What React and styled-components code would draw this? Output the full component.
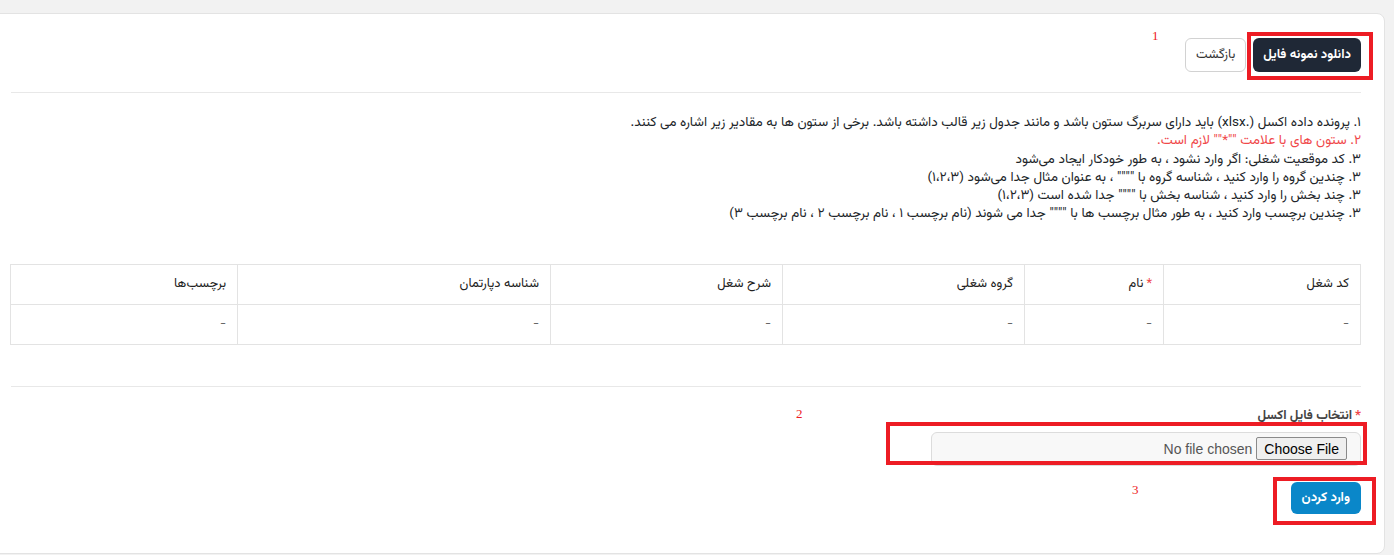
import React from "react";
import styled, { createGlobalStyle } from "styled-components";

const GlobalStyle = createGlobalStyle`
  html, body {
    margin: 0;
    padding: 0;
    overflow: hidden;
    background: #f2f2f2;
  }
  * {
    box-sizing: border-box;
  }
`;

const FONT = `"Vazirmatn", "Noto Sans Arabic", "DejaVu Sans", sans-serif`;

const Page = styled.div`
  position: relative;
  height: 555px;
  padding-top: 13px;
`;

const Card = styled.div`
  direction: rtl;
  margin: 0 9px 0 -12px;
  height: 541px;
  background: #fff;
  border: 1px solid #e3e3e3;
  border-radius: 8px;
  padding: 24px 23px 0 22px;
  font-family: ${FONT};
  color: #212529;
`;

const Toolbar = styled.div`
  display: flex;
  gap: 7px;
`;

const Button = styled.button`
  height: 34px;
  padding: 0 ${({ $pad }) => $pad || 9}px;
  border-radius: 6px;
  font-family: ${FONT};
  font-size: 13px;
  font-weight: ${({ $bold }) => ($bold ? 700 : 400)};
  cursor: pointer;
  background: ${({ $bg }) => $bg || "#fff"};
  color: ${({ $fg }) => $fg || "#333"};
  border: 1px solid ${({ $line }) => $line || "transparent"};
`;

const Rule = styled.div`
  height: 1px;
  background: #e8e8e8;
  margin-top: ${({ $top }) => $top}px;
`;

const Notes = styled.div`
  margin-top: 21px;
  font-size: 13.5px;
  line-height: 18.3px;
`;

const Note = styled.div`
  color: ${({ $warn }) => ($warn ? "#f0484a" : "#212529")};
`;

const Table = styled.table`
  margin-top: 40px;
  width: 100%;
  border-collapse: collapse;
  table-layout: fixed;
  font-size: 13px;
`;

const Cell = styled.td`
  height: 40px;
  padding: 0 11px;
  border: 1px solid #e3e3e3;
  text-align: right;
  font-weight: 400;
  color: ${({ $head }) => ($head ? "#222" : "#666")};
`;

const Star = styled.span`
  color: #f0484a;
  margin-left: 3px;
`;

const Label = styled.div`
  margin-top: 21px;
  font-size: 13px;
  font-weight: 700;
  color: #444;
  line-height: 16px;
`;

const FileBox = styled.div`
  margin-top: 8px;
  width: 430px;
  height: 34px;
  display: flex;
  align-items: center;
  gap: 4px;
  padding-right: 13px;
  background: #f8f8f8;
  border: 1px solid #dcdcdc;
  border-radius: 6px;
  font-family: "Liberation Sans", Arial, sans-serif;
  font-size: 14px;
`;

const PickButton = styled.button`
  height: 23px;
  padding: 0 7px;
  background: #efefef;
  border: 1px solid #8a8a8a;
  border-radius: 2px;
  font-family: "Liberation Sans", Arial, sans-serif;
  font-size: 14px;
  color: #000;
`;

const FileHint = styled.span`
  color: #555;
`;

const Submit = styled(Button)`
  margin-top: 16px;
  height: 32px;
`;

const Frame = styled.div`
  position: absolute;
  border: 4px solid #ed1c24;
  pointer-events: none;
`;

const Mark = styled.div`
  position: absolute;
  color: #ed1c24;
  font-family: "Liberation Serif", serif;
  font-size: 13px;
  line-height: 13px;
`;

const notes = [
  "۱. پرونده داده اکسل (.xlsx) باید دارای سربرگ ستون باشد و مانند جدول زیر قالب داشته باشد. برخی از ستون ها به مقادیر زیر اشاره می کنند.",
  "۲. ستون های با علامت \"\"*\"\" لازم است.",
  "۳. کد موقعیت شغلی: اگر وارد نشود ، به طور خودکار ایجاد می‌شود",
  "۳. چندین گروه را وارد کنید ، شناسه گروه با \"\"\"\" ، به عنوان مثال جدا می‌شود (۱،۲،۳)",
  "۳. چند بخش را وارد کنید ، شناسه بخش با \"\"\"\" جدا شده است (۱،۲،۳)",
  "۳. چندین برچسب وارد کنید ، به طور مثال برچسب ها با \"\"\"\" جدا می شوند (نام برچسب ۱ ، نام برچسب ۲ ، نام برچسب ۳)",
];

const columns = [
  { title: "کد شغل", width: 197 },
  { title: "نام", width: 139, required: true },
  { title: "گروه شغلی", width: 242 },
  { title: "شرح شغل", width: 232 },
  { title: "شناسه دپارتمان", width: 313 },
  { title: "برچسب‌ها", width: 227 },
];

const App = () => {
  return (
    <>
      <GlobalStyle />
      <Page>
        <Card>
          <Toolbar>
            <Button $bg="#1f2836" $fg="#fff" $bold>
              دانلود نمونه فایل
            </Button>
            <Button $line="#d2d2d2" $pad={10}>
              بازگشت
            </Button>
          </Toolbar>
          <Rule $top={20} />
          <Notes>
            {notes.map((n, i) => (
              <Note key={i} $warn={i === 1}>
                {n}
              </Note>
            ))}
          </Notes>
          <Table>
            <colgroup>
              {columns.map((c) => (
                <col key={c.title} style={{ width: c.width }} />
              ))}
            </colgroup>
            <thead>
              <tr>
                {columns.map((c) => (
                  <Cell as="th" key={c.title} $head>
                    {c.required && <Star>*</Star>}
                    {c.title}
                  </Cell>
                ))}
              </tr>
            </thead>
            <tbody>
              <tr>
                {columns.map((c) => (
                  <Cell key={c.title}>-</Cell>
                ))}
              </tr>
            </tbody>
          </Table>
          <Rule $top={41} />
          <Label>
            <Star>*</Star>
            انتخاب فایل اکسل
          </Label>
          <FileBox>
            <PickButton>Choose File</PickButton>
            <FileHint>No file chosen</FileHint>
          </FileBox>
          <Submit $bg="#0a87c9" $fg="#fff" $bold $pad={10}>
            وارد کردن
          </Submit>
        </Card>

        <Frame style={{ left: 1247, top: 32, width: 126, height: 48 }} />
        <Mark style={{ left: 1152, top: 29 }}>1</Mark>
        <Frame style={{ left: 886, top: 422, width: 481, height: 43 }} />
        <Mark style={{ left: 796, top: 407 }}>2</Mark>
        <Frame style={{ left: 1273, top: 477, width: 103, height: 48 }} />
        <Mark style={{ left: 1132, top: 483 }}>3</Mark>
      </Page>
    </>
  );
};

export default App;
